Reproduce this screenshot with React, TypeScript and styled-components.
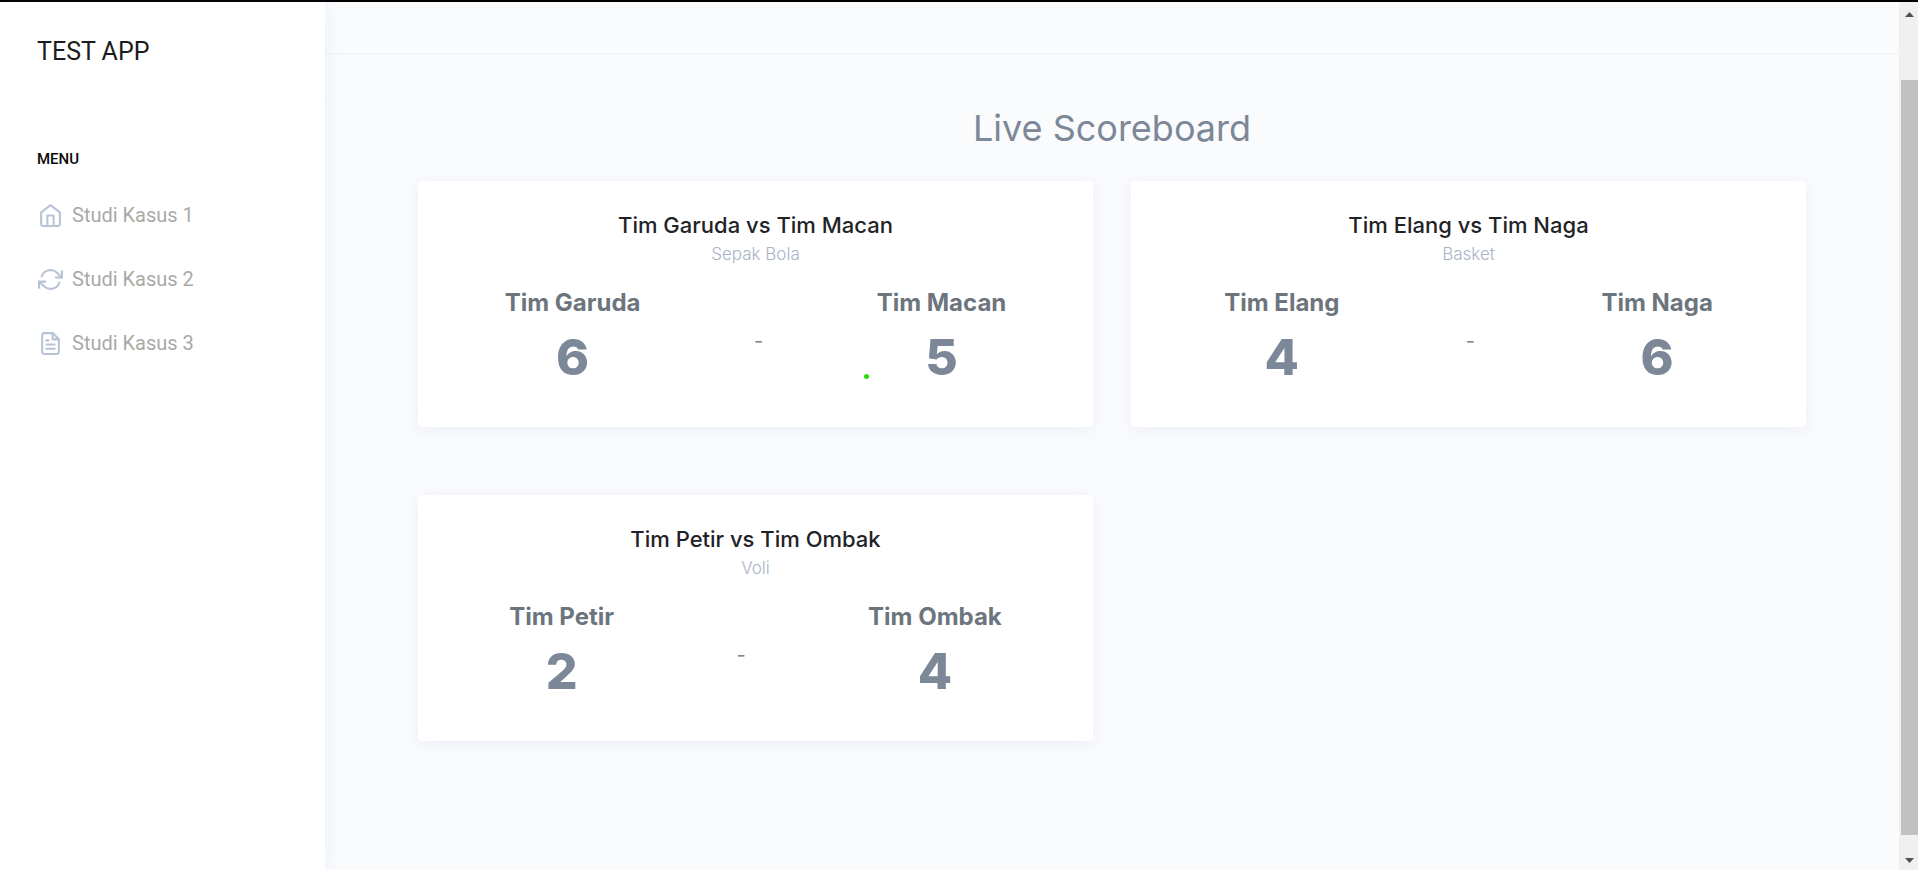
import React from 'react';
import styled, { createGlobalStyle } from 'styled-components';

const GlobalStyle = createGlobalStyle`
  *, *::before, *::after { box-sizing: border-box; }
  body {
    margin: 0;
    background: #fafbfd;
    color: #7c8798;
    font-family: Inter, Roboto, sans-serif;
    font-size: 16px;
  }
  h1, h2, h3, p, ul { margin: 0; padding: 0; }
`;

const Shell = styled.div`
  display: flex;
  min-height: 100vh;
  border-top: 2px solid #000;
`;

const Sidebar = styled.aside`
  flex: 0 0 325px;
  position: relative;
  background: #fff;
  box-shadow: 1px 0 20px rgba(80, 130, 180, 0.09);
  font-family: Roboto, Inter, sans-serif;
`;

const Brand = styled.div`
  display: flex;
  align-items: center;
  height: 101px;
  padding: 0 37px;
  border-bottom: 1px solid #fdfdfe;
`;

const BrandLink = styled.a`
  color: #1c1c1c;
  font-size: 25px;
  line-height: 32px;
  text-decoration: none;
`;

const MenuHeading = styled.h2`
  padding: 44px 37px 24px;
  color: #0a0a0a;
  font-size: 15px;
  font-weight: 500;
  line-height: 24px;
`;

const MenuList = styled.ul`
  display: flex;
  flex-direction: column;
  gap: 24px;
  list-style: none;
`;

const MenuLink = styled.a`
  display: flex;
  align-items: center;
  gap: 9px;
  height: 40px;
  padding: 0 38px;
  color: #a9a9a9;
  font-size: 20px;
  line-height: 40px;
  text-decoration: none;
`;

const MenuIcon = styled.svg`
  width: 25px;
  height: 25px;
  fill: none;
  stroke: #b9c3d7;
  stroke-width: 2;
  stroke-linecap: round;
  stroke-linejoin: round;
`;

const Main = styled.main`
  flex: 1;
  min-width: 0;
`;

const Topbar = styled.header`
  height: 52px;
  border-bottom: 1px solid #edf0f4;
`;

const Content = styled.section`
  padding: 50px 93px;
`;

const PageTitle = styled.h1`
  margin-bottom: 29px;
  color: #7c8798;
  font-size: 36px;
  font-weight: 400;
  line-height: 48px;
  text-align: center;
`;

const MatchGrid = styled.div`
  display: grid;
  grid-template-columns: repeat(2, minmax(0, 1fr));
  gap: 68px 38px;
`;

const MatchCard = styled.article`
  position: relative;
  padding: 30px 30px 40px;
  border-radius: 4px;
  background: #fff;
  box-shadow: 0 3px 16px rgba(110, 140, 170, 0.11);
  text-align: center;
`;

const MatchTitle = styled.h2`
  margin-bottom: 4px;
  color: #1f2327;
  font-size: 22px;
  font-weight: 500;
  line-height: 28px;
`;

const Sport = styled.p`
  margin-bottom: 22px;
  color: #a9b3c7;
  font-size: 17px;
  font-weight: 300;
  line-height: 22px;
`;

const ScoreRow = styled.div`
  display: flex;
  align-items: center;
  justify-content: space-around;
`;

const TeamName = styled.h3`
  margin-bottom: 8px;
  color: #6c757d;
  font-size: 24px;
  font-weight: 700;
  line-height: 32px;
`;

const Score = styled.p`
  color: #7c8798;
  font-size: 50px;
  font-weight: 800;
  line-height: 60px;
`;

const Dash = styled.span`
  padding-top: 8px;
  font-size: 20px;
  line-height: 24px;
`;

const LiveDot = styled.i`
  position: absolute;
  top: 193px;
  right: 224px;
  width: 5px;
  height: 5px;
  border-radius: 50%;
  background: #2bdc0c;
`;

const ScrollTrack = styled.div`
  flex: 0 0 19px;
  display: grid;
  grid-template-rows: 17px 61fr 755fr 18fr 17px;
  padding-left: 2px;
  background: #f0f0f0;
`;

const ScrollThumb = styled.div`
  grid-row: 3;
  background: #c1c1c1;
`;

const ScrollArrow = styled.svg<{ $row: number }>`
  grid-row: ${(p) => p.$row};
  width: 17px;
  height: 17px;
  fill: #505050;
`;

type IconName = 'home' | 'refresh' | 'file';

const iconPaths: Record<IconName, string[]> = {
  home: ['M3 9l9-7 9 7v11a2 2 0 0 1-2 2H5a2 2 0 0 1-2-2z', 'M9 22V12h6v10'],
  refresh: [
    'M23 4v6h-6',
    'M1 20v-6h6',
    'M3.51 9a9 9 0 0 1 14.85-3.36L23 10M1 14l4.64 4.36A9 9 0 0 0 20.49 15',
  ],
  file: [
    'M14 2H6a2 2 0 0 0-2 2v16a2 2 0 0 0 2 2h12a2 2 0 0 0 2-2V8z',
    'M14 2v6h6',
    'M16 13H8',
    'M16 17H8',
    'M10 9H8',
  ],
};

const menu: { label: string; icon: IconName }[] = [
  { label: 'Studi Kasus 1', icon: 'home' },
  { label: 'Studi Kasus 2', icon: 'refresh' },
  { label: 'Studi Kasus 3', icon: 'file' },
];

interface Match {
  sport: string;
  home: string;
  away: string;
  homeScore: number;
  awayScore: number;
  live?: boolean;
}

const matches: Match[] = [
  { sport: 'Sepak Bola', home: 'Tim Garuda', away: 'Tim Macan', homeScore: 6, awayScore: 5, live: true },
  { sport: 'Basket', home: 'Tim Elang', away: 'Tim Naga', homeScore: 4, awayScore: 6 },
  { sport: 'Voli', home: 'Tim Petir', away: 'Tim Ombak', homeScore: 2, awayScore: 4 },
];

function Team({ name, score }: { name: string; score: number }) {
  return (
    <div>
      <TeamName>{name}</TeamName>
      <Score>{score}</Score>
    </div>
  );
}

export default function App() {
  return (
    <>
      <GlobalStyle />
      <Shell>
        <Sidebar>
          <Brand>
            <BrandLink href="#">TEST APP</BrandLink>
          </Brand>
          <nav aria-labelledby="menu-heading">
            <MenuHeading id="menu-heading">MENU</MenuHeading>
            <MenuList>
              {menu.map((item) => (
                <li key={item.label}>
                  <MenuLink href="#">
                    <MenuIcon viewBox="0 0 24 24" aria-hidden="true">
                      {iconPaths[item.icon].map((d) => (
                        <path key={d} d={d} />
                      ))}
                    </MenuIcon>
                    {item.label}
                  </MenuLink>
                </li>
              ))}
            </MenuList>
          </nav>
        </Sidebar>
        <Main>
          <Topbar />
          <Content>
            <PageTitle>Live Scoreboard</PageTitle>
            <MatchGrid>
              {matches.map((m) => (
                <MatchCard key={m.home}>
                  <MatchTitle>
                    {m.home} vs {m.away}
                  </MatchTitle>
                  <Sport>{m.sport}</Sport>
                  <ScoreRow>
                    <Team name={m.home} score={m.homeScore} />
                    <Dash>-</Dash>
                    <Team name={m.away} score={m.awayScore} />
                  </ScoreRow>
                  {m.live && <LiveDot />}
                </MatchCard>
              ))}
            </MatchGrid>
          </Content>
        </Main>
        <ScrollTrack aria-hidden="true">
          <ScrollArrow $row={1} viewBox="0 0 17 17">
            <path d="M4 15h9L8.500 10z" />
          </ScrollArrow>
          <ScrollThumb />
          <ScrollArrow $row={5} viewBox="0 0 17 17">
            <path d="M4 5h9L8.500 10z" />
          </ScrollArrow>
        </ScrollTrack>
      </Shell>
    </>
  );
}
